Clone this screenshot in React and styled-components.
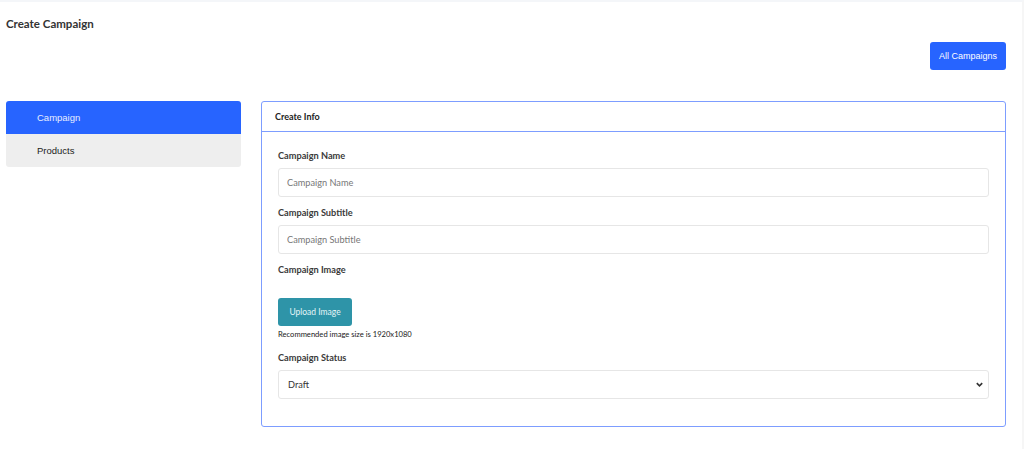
import React from "react";
import styled, { createGlobalStyle } from "styled-components";

const GlobalStyle = createGlobalStyle`
  html, body {
    margin: 0;
    padding: 0;
    background: #fff;
  }
  body {
    font-family: Lato, "Open Sans", sans-serif;
    color: #333;
  }
`;

const Page = styled.div`
  min-height: 449px;
  box-sizing: border-box;
  border-top: 2px solid #f4f6f9;
  border-right: 2px solid #f6f6f6;
  padding: 0 16px 0 6px;
`;

const Title = styled.h1`
  margin: 0;
  padding-top: 14px;
  font-size: 11.5px;
  font-weight: 700;
  line-height: 15px;
  color: #333;
`;

const Toolbar = styled.div`
  display: flex;
  justify-content: flex-end;
  margin-top: 11px;
`;

const BlueButton = styled.button`
  height: 28px;
  padding: 0 9px;
  border: none;
  border-radius: 3px;
  background: #2764ff;
  color: #fff;
  font-family: "Liberation Sans", Arial, sans-serif;
  font-size: 9px;
`;

const Layout = styled.div`
  display: flex;
  align-items: flex-start;
  gap: 20px;
  margin-top: 31px;
`;

const Sidebar = styled.nav`
  width: 235px;
  flex: none;
  display: flex;
  flex-direction: column;
  border-radius: 3px;
  overflow: hidden;
`;

const NavItem = styled.div`
  height: 33px;
  display: flex;
  align-items: center;
  padding-left: 31px;
  font-family: "Liberation Sans", Arial, sans-serif;
  font-size: 9.5px;
  background: ${(p) => (p.active ? "#2764ff" : "#eeeeee")};
  color: ${(p) => (p.active ? "#e8eeff" : "#222")};
`;

const Card = styled.section`
  flex: 1;
  border: 1px solid #7d9dff;
  border-radius: 3px;
`;

const CardHeader = styled.div`
  height: 29px;
  display: flex;
  align-items: center;
  padding-left: 13px;
  border-bottom: 1px solid #7d9dff;
  font-size: 9px;
  font-weight: 700;
  color: #222;
`;

const CardBody = styled.div`
  padding: 17px 16px 27px;
`;

const Field = styled.div`
  display: flex;
  flex-direction: column;
  margin-bottom: ${(p) => p.gap ?? 9}px;
`;

const Label = styled.label`
  font-size: 9.2px;
  font-weight: 700;
  line-height: 14px;
  color: #3a3a3a;
  margin-bottom: 5px;
`;

const Input = styled.input`
  box-sizing: border-box;
  height: 29px;
  padding: 0 8px;
  border: 1px solid #e6e6e6;
  border-radius: 3px;
  font-family: Lato, sans-serif;
  font-size: 9.2px;
  color: #333;
  outline: none;
  &::placeholder {
    color: #777;
  }
`;

const SelectBox = styled.div`
  box-sizing: border-box;
  height: 29px;
  display: flex;
  align-items: center;
  justify-content: space-between;
  padding: 0 4px 0 9px;
  border: 1px solid #e6e6e6;
  border-radius: 3px;
  font-size: 9.2px;
  color: #333;
`;

const UploadButton = styled.button`
  align-self: flex-start;
  height: 28px;
  width: 74px;
  margin-top: 16px;
  border: none;
  border-radius: 3px;
  background: #2e94a8;
  color: #e6f4f7;
  font-family: Lato, sans-serif;
  font-size: 8.5px;
`;

const Hint = styled.div`
  font-size: 7.6px;
  line-height: 12px;
  color: #1a1a1a;
  margin-top: 2px;
`;

const Chevron = () => (
  <svg width="9" height="9" viewBox="0 0 10 10">
    <path d="M2 3.5 L5 6.5 L8 3.5" fill="none" stroke="#333" strokeWidth="1.8" />
  </svg>
);

export default function App() {
  return (
    <Page>
      <GlobalStyle />
      <Title>Create Campaign</Title>
      <Toolbar>
        <BlueButton>All Campaigns</BlueButton>
      </Toolbar>
      <Layout>
        <Sidebar>
          <NavItem active>Campaign</NavItem>
          <NavItem>Products</NavItem>
        </Sidebar>
        <Card>
          <CardHeader>Create Info</CardHeader>
          <CardBody>
            <Field>
              <Label>Campaign Name</Label>
              <Input placeholder="Campaign Name" />
            </Field>
            <Field>
              <Label>Campaign Subtitle</Label>
              <Input placeholder="Campaign Subtitle" />
            </Field>
            <Field gap={11}>
              <Label>Campaign Image</Label>
              <UploadButton>Upload Image</UploadButton>
              <Hint>Recommended image size is 1920x1080</Hint>
            </Field>
            <Field gap={0}>
              <Label>Campaign Status</Label>
              <SelectBox>
                <span>Draft</span>
                <Chevron />
              </SelectBox>
            </Field>
          </CardBody>
        </Card>
      </Layout>
    </Page>
  );
}
